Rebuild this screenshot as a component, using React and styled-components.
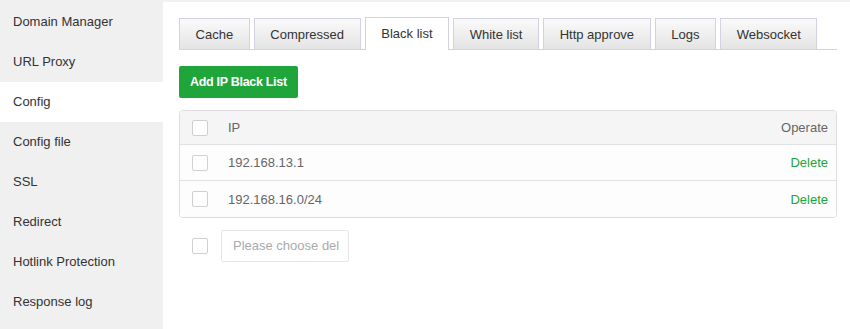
import React from "react";
import styled, { createGlobalStyle } from "styled-components";

const Global = createGlobalStyle`
  html, body { margin: 0; padding: 0; background: #fff; }
  body { font-family: "Liberation Sans", Arial, sans-serif; font-size: 13px; color: #333; }
  * { box-sizing: border-box; }
`;

const Layout = styled.div`
  display: flex;
  height: 329px;
  overflow: hidden;
`;

const Sidebar = styled.nav`
  width: 163px;
  flex-shrink: 0;
  background: #f0f0f0;
  padding-top: 2px;
`;

const NavItem = styled.div`
  height: 40px;
  line-height: 40px;
  padding-left: 13px;
  color: #333;
  background: ${(p) => (p.$active ? "#fff" : "transparent")};
  white-space: nowrap;
`;

const Main = styled.main`
  flex: 1;
  border-top: 2px solid #f2f2f2;
  padding: 16px 13px 0 16px;
  display: flex;
  flex-direction: column;
  align-items: flex-start;
`;

const TabBar = styled.div`
  display: flex;
  gap: 4px;
  width: 100%;
  height: 32px;
  border-bottom: 1px solid #d2d2e2;
`;

const Tab = styled.div`
  height: ${(p) => (p.$active ? "33px" : "32px")};
  line-height: 31px;
  padding: 0 15.6px;
  border: 1px solid #d2d2e2;
  border-bottom: ${(p) => (p.$active ? "none" : "1px solid #d2d2e2")};
  background: ${(p) =>
    p.$active ? "#fff" : "linear-gradient(to bottom, #fafafa, #e4e4e4)"};
  color: #333;
  white-space: nowrap;
  margin-top: ${(p) => (p.$active ? "-1px" : "0")};
  position: relative;
  z-index: ${(p) => (p.$active ? 1 : 0)};
`;

const AddButton = styled.button`
  margin-top: 16px;
  height: 32px;
  padding: 0 11px;
  border: none;
  border-radius: 2px;
  background: #20a53a;
  color: #fff;
  font-family: "Liberation Sans", Arial, sans-serif;
  font-size: 12.5px;
  font-weight: bold;
  letter-spacing: -0.3px;
  cursor: pointer;
`;

const Table = styled.div`
  margin-top: 12px;
  width: 100%;
  border: 1px solid #ddd;
  border-radius: 4px;
  overflow: hidden;
  color: #666;
`;

const Row = styled.div`
  display: flex;
  align-items: center;
  height: ${(p) => (p.$head ? "34px" : "36px")};
  padding: 0 8px 0 12px;
  background: ${(p) => (p.$head ? "#f5f5f5" : "#fdfdfd")};
  border-bottom: ${(p) => (p.$last ? "none" : "1px solid #e2e2e2")};
`;

const Check = styled.span`
  display: inline-block;
  width: 16px;
  height: 16px;
  border: 1px solid #d0d0d0;
  border-radius: 2px;
  background: #fff;
  flex-shrink: 0;
`;

const IpCell = styled.div`
  flex: 1;
  padding-left: 20px;
`;

const OpCell = styled.div`
  text-align: right;
`;

const DeleteLink = styled.a`
  color: #20a53a;
  text-decoration: none;
  cursor: pointer;
`;

const Footer = styled.div`
  margin-top: 12px;
  padding-left: 13px;
  display: flex;
  align-items: center;
  gap: 13px;
`;

const DelSelect = styled.div`
  height: 32px;
  line-height: 30px;
  padding: 0 9px 0 11px;
  border: 1px solid #e6e6e6;
  border-radius: 2px;
  color: #aaa;
  white-space: nowrap;
`;

const navItems = [
  "Domain Manager",
  "URL Proxy",
  "Config",
  "Config file",
  "SSL",
  "Redirect",
  "Hotlink Protection",
  "Response log",
];

const tabs = [
  "Cache",
  "Compressed",
  "Black list",
  "White list",
  "Http approve",
  "Logs",
  "Websocket",
];

const ips = ["192.168.13.1", "192.168.16.0/24"];

export default function App() {
  return (
    <>
      <Global />
      <Layout>
        <Sidebar>
          {navItems.map((n) => (
            <NavItem key={n} $active={n === "Config"}>
              {n}
            </NavItem>
          ))}
        </Sidebar>
        <Main>
          <TabBar>
            {tabs.map((t) => (
              <Tab key={t} $active={t === "Black list"}>
                {t}
              </Tab>
            ))}
          </TabBar>
          <AddButton>Add IP Black List</AddButton>
          <Table>
            <Row $head>
              <Check />
              <IpCell>IP</IpCell>
              <OpCell>Operate</OpCell>
            </Row>
            {ips.map((ip, i) => (
              <Row key={ip} $last={i === ips.length - 1}>
                <Check />
                <IpCell>{ip}</IpCell>
                <OpCell>
                  <DeleteLink>Delete</DeleteLink>
                </OpCell>
              </Row>
            ))}
          </Table>
          <Footer>
            <Check />
            <DelSelect>Please choose del</DelSelect>
          </Footer>
        </Main>
      </Layout>
    </>
  );
}
